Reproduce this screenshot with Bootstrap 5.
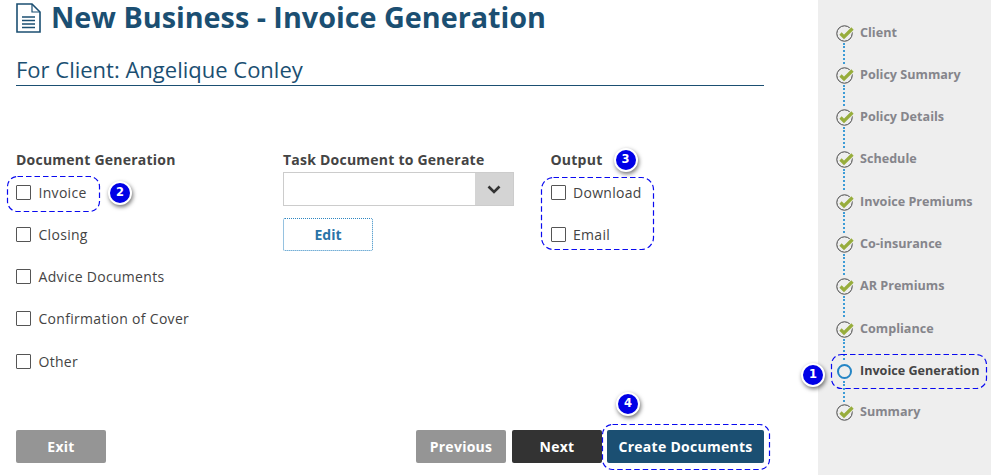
<!DOCTYPE html>
<html lang="en">
<head>
<meta charset="utf-8">
<title>New Business - Invoice Generation</title>
<link href="https://cdn.jsdelivr.net/npm/bootstrap@5.3.0/dist/css/bootstrap.min.css" rel="stylesheet">
<style>
html,body{height:475px;overflow:hidden}
body{font-family:"Open Sans","Liberation Sans",sans-serif;color:#444;background:#fff}
.page-wrap{height:475px}
.main-pane{width:818px;padding:0 54px 0 16px;flex:none}
.side-pane{flex:1;background:#eee;padding:22.520px 0 0 18px}
.title-row{height:36px;gap:10px}
.title-row h1{font-size:28.750px;font-weight:700;margin:0 0 2px;line-height:34px;color:#1b4f72}
.client-line{font-size:22px;color:#1b4f72;margin:18px 0 0;line-height:30px;height:32px;border-bottom:1px solid #1b4f72;font-weight:400}
.form-cols{margin-top:64px;height:280px}
.col-doc{width:267px}.col-task{width:267.500px}
.field-title{font-size:14px;font-weight:700;color:#444;line-height:20px;letter-spacing:.23px;height:24px;margin:0}
.col-task .field-title{height:22px}
.chk-row{height:42.250px;display:flex;align-items:center;gap:7.500px;font-size:14px;letter-spacing:.3px;color:#444;position:relative;margin:0;padding-bottom:6.200px}
.chk-box{width:15px;height:15px;border:1px solid #555;background:#fff;flex:none;appearance:none;margin:0;border-radius:1px}
.sel-box{width:231px;height:34px;border:1px solid #ccc;background:#fff;display:flex;justify-content:flex-end}
.sel-arrow{width:38px;background:#d4d4d4;display:flex;align-items:center;justify-content:center}
.edit-btn{display:block;width:90px;height:33px;margin-top:12px;border:1px dotted #2e86c1;border-radius:2px;background:#fff;color:#2a74a8;font-weight:700;font-size:14px;padding:0}
.foot-row{height:33px}
.foot-btn{height:33px;width:90px;border:0;border-radius:2px;color:#fff;font-weight:700;font-size:14px;letter-spacing:.27px;padding:0}
.btn-grey{background:#959595}.btn-dark-x{background:#333;margin-right:-1px}.btn-navy{background:#1b4f72;width:157px}
.foot-right{gap:6px}
.step-row{height:42.320px;display:flex;align-items:flex-start;position:relative;font-size:12.600px;font-weight:700;color:#85858b;line-height:20px}
.step-last{margin-top:-1px}
.step-ico{width:18px;height:17px;margin-right:6px;margin-top:2px;flex:none;position:relative;z-index:1}
.step-row:not(:last-child)::after{content:"";position:absolute;left:7px;top:20px;height:21px;border-left:2px dotted #3c9bd6}
.step-now{color:#444}
.note-outline{position:absolute;pointer-events:none;overflow:visible}
.note-outline rect{fill:none;stroke:#0a0af0;stroke-width:1.200;stroke-dasharray:5.500 3}
.out-inv{left:-9px;top:2px;width:93px;height:36px}
.out-out{left:-9.500px;top:27px;width:113px;height:73px}
.out-create{left:-5px;top:-6px;width:168px;height:46px}
.out-step{left:-5px;top:-7px;width:156px;height:35px}
.note-num{position:absolute;width:24px;height:24px;border-radius:50%;background:#0000e6;border:2.500px solid #fff;box-shadow:1px 2px 4px rgba(0,0,0,.55);color:#fff;font-size:11.500px;font-weight:700;line-height:19px;text-align:center;font-family:"DejaVu Sans",sans-serif;letter-spacing:0}
.num-2{left:92px;top:7px}.num-3{left:63px;top:-2px}.num-4{left:9px;top:-38px}.num-1{left:-35px;top:2px}
.rel-box{position:relative}
</style>
</head>
<body>
<div class="d-flex page-wrap">
  <div class="main-pane d-flex flex-column">
    <div class="d-flex align-items-center title-row">
      <svg width="25" height="30" viewBox="0 0 25 30" fill="none" stroke="#1b4f72" stroke-width="1.600"><path d="M1 1H16L24 9V29H1Z"/><path d="M16 1V9H24" stroke-width="1.200"/><path d="M6 14H19M6 17.500H19M6 21H19M6 24.500H19" stroke-width="1.500"/></svg>
      <h1>New Business - Invoice Generation</h1>
    </div>
    <h2 class="client-line">For Client: Angelique Conley</h2>
    <div class="d-flex form-cols">
      <div class="col-doc rel-box">
        <p class="field-title">Document Generation</p>
        <div class="chk-row"><input class="chk-box" type="checkbox" aria-label="Invoice"><span>Invoice</span>
          <svg class="note-outline out-inv" width="93" height="36"><rect x=".5" y=".5" width="92" height="35" rx="10"/></svg>
          <span class="note-num num-2">2</span></div>
        <div class="chk-row"><input class="chk-box" type="checkbox" aria-label="Closing"><span>Closing</span></div>
        <div class="chk-row"><input class="chk-box" type="checkbox" aria-label="Advice Documents"><span>Advice Documents</span></div>
        <div class="chk-row"><input class="chk-box" type="checkbox" aria-label="Confirmation of Cover"><span>Confirmation of Cover</span></div>
        <div class="chk-row"><input class="chk-box" type="checkbox" aria-label="Other"><span>Other</span></div>
      </div>
      <div class="col-task">
        <p class="field-title">Task Document to Generate</p>
        <div class="sel-box"><div class="sel-arrow"><svg width="14" height="9" viewBox="0 0 14 9" fill="none" stroke="#333" stroke-width="2.600"><path d="M1.500 1.500 7 7l5.500-5.500"/></svg></div></div>
        <button class="edit-btn" type="button">Edit</button>
      </div>
      <div class="rel-box">
        <p class="field-title">Output</p>
        <div class="chk-row"><input class="chk-box" type="checkbox" aria-label="Download"><span>Download</span></div>
        <div class="chk-row"><input class="chk-box" type="checkbox" aria-label="Email"><span>Email</span></div>
        <svg class="note-outline out-out" width="113" height="73"><rect x=".5" y=".5" width="112" height="72" rx="12"/></svg>
        <span class="note-num num-3">3</span>
      </div>
    </div>
    <div class="d-flex justify-content-between foot-row">
      <button class="foot-btn btn-grey" type="button">Exit</button>
      <div class="d-flex foot-right">
        <button class="foot-btn btn-grey" type="button">Previous</button>
        <button class="foot-btn btn-dark-x" type="button">Next</button>
        <div class="rel-box">
          <button class="foot-btn btn-navy" type="button">Create Documents</button>
          <svg class="note-outline out-create" width="168" height="46"><rect x=".5" y=".5" width="167" height="45" rx="10"/></svg>
          <span class="note-num num-4">4</span>
        </div>
      </div>
    </div>
  </div>
  <div class="side-pane">
    <svg width="0" height="0" class="position-absolute"><defs><g id="done-ico"><circle cx="8.500" cy="8.500" r="7.700" fill="none" stroke="#444" stroke-width="1"/><path d="M4.500 8.500l3.500 3.500L16.500 3.500" fill="none" stroke="#eee" stroke-width="5"/><path d="M4.500 8.500l3.500 3.500L16.500 3.500" fill="none" stroke="#97ad3c" stroke-width="3.200"/></g></defs></svg>
    <div class="step-row"><svg class="step-ico" viewBox="0 0 18 17"><use href="#done-ico"/></svg>Client</div>
    <div class="step-row"><svg class="step-ico" viewBox="0 0 18 17"><use href="#done-ico"/></svg>Policy Summary</div>
    <div class="step-row"><svg class="step-ico" viewBox="0 0 18 17"><use href="#done-ico"/></svg>Policy Details</div>
    <div class="step-row"><svg class="step-ico" viewBox="0 0 18 17"><use href="#done-ico"/></svg>Schedule</div>
    <div class="step-row"><svg class="step-ico" viewBox="0 0 18 17"><use href="#done-ico"/></svg>Invoice Premiums</div>
    <div class="step-row"><svg class="step-ico" viewBox="0 0 18 17"><use href="#done-ico"/></svg>Co-insurance</div>
    <div class="step-row"><svg class="step-ico" viewBox="0 0 18 17"><use href="#done-ico"/></svg>AR Premiums</div>
    <div class="step-row"><svg class="step-ico" viewBox="0 0 18 17"><use href="#done-ico"/></svg>Compliance</div>
    <div class="step-row step-now"><svg class="step-ico" viewBox="0 0 18 17"><circle cx="8.500" cy="8.500" r="6.500" fill="#eee" stroke="#2585c5" stroke-width="2"/></svg>Invoice Generation
      <svg class="note-outline out-step" width="156" height="35"><rect x=".5" y=".5" width="155" height="34" rx="10"/></svg>
      <span class="note-num num-1">1</span></div>
    <div class="step-row step-last"><svg class="step-ico" viewBox="0 0 18 17"><use href="#done-ico"/></svg>Summary</div>
  </div>
</div>
<script src="https://cdn.jsdelivr.net/npm/bootstrap@5.3.0/dist/js/bootstrap.bundle.min.js"></script>
</body>
</html>
